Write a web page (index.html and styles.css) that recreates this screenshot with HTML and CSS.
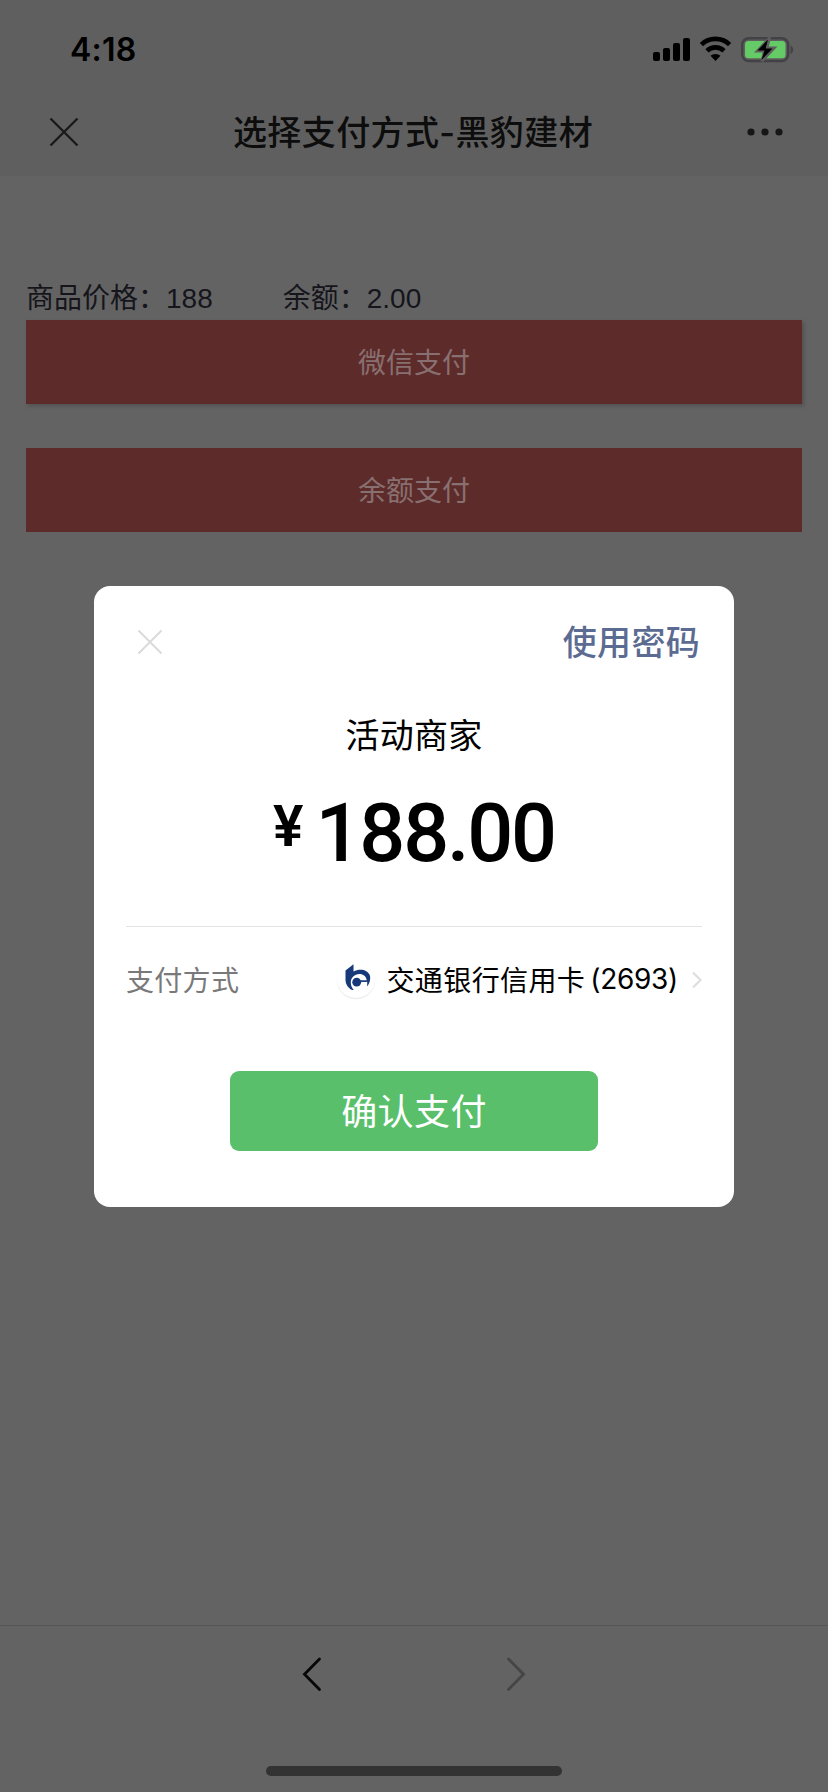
FILE: index.html
```html
<!DOCTYPE html>
<html lang="zh-CN">
<head>
<meta charset="utf-8">
<title>选择支付方式-黑豹建材</title>
<link rel="stylesheet" href="styles.css">
</head>
<body>
<div class="screen">
  <header class="header">
    <div class="status">
      <span class="time">4:18</span>
      <svg class="status-icons" width="144" height="28" viewBox="0 0 144 28">
        <rect x="1" y="16" width="7" height="9" rx="2"/>
        <rect x="11" y="12" width="7" height="13" rx="2"/>
        <rect x="21" y="7" width="7" height="18" rx="2"/>
        <rect x="31" y="2" width="7" height="23" rx="2"/>
        <path fill="none" stroke="#000" stroke-width="4.6" d="M49.4 8.6a20.3 20.3 0 0 1 28.2 0"/>
        <path fill="none" stroke="#000" stroke-width="4.6" d="M55 14.8a12.2 12.2 0 0 1 17 0"/>
        <path d="M58.5 19.8a7.5 7.5 0 0 1 10 0L63.500 25z"/>
        <rect x="90.200" y="2.200" width="46" height="22.800" rx="6.500" fill="none" stroke="#434145" stroke-width="2.400"/>
        <rect x="93" y="5" width="40.500" height="17.200" rx="3.500" fill="#65cb66"/>
        <path fill="#434145" d="M138.600 9.500c3.400 1.500 3.400 7 0 8.500z"/>
        <path stroke="#5f5f5f" stroke-width="3" d="M117.200 2.500L105.500 15h7l-2.500 10L122 12h-7z"/>
        <path d="M116 3.500L105.500 14.500h7l-3 9.500L120.500 12.500h-7z"/>
      </svg>
    </div>
    <div class="navbar">
      <svg class="nav-close" width="30" height="30" viewBox="0 0 30 30"><path d="M1.500 1.500l27 27M28.500 1.500l-27 27"/></svg>
      <h1 class="title">选择支付方式-黑豹建材</h1>
      <svg class="nav-more" width="36" height="8" viewBox="0 0 36 8"><circle cx="4" cy="4" r="3.600"/><circle cx="18" cy="4" r="3.600"/><circle cx="32" cy="4" r="3.600"/></svg>
    </div>
  </header>
  <main class="content">
    <div class="prices"><span class="price">商品价格：188</span><span class="balance">余额：2.00</span></div>
    <div class="pay-option raised">微信支付</div>
    <div class="pay-option">余额支付</div>
  </main>
  <footer class="toolbar">
    <div class="arrows">
      <svg width="20" height="36" viewBox="0 0 20 36"><path class="back" d="M17.500 2L2.500 17.200l15 15.200"/></svg>
      <svg width="20" height="36" viewBox="0 0 20 36"><path class="forward" d="M2.500 2l15 15.200-15 15.200"/></svg>
    </div>
    <div class="home-bar"></div>
  </footer>
</div>
<section class="dialog">
  <div class="dialog-head">
    <svg class="dialog-close" width="26" height="26" viewBox="0 0 26 26"><path d="M1.500 1.500l23 23M24.500 1.500l-23 23"/></svg>
    <span class="use-password">使用密码</span>
  </div>
  <div class="merchant">活动商家</div>
  <div class="amount"><span class="yen">¥</span><span class="sum">188.00</span></div>
  <div class="method">
    <span class="method-label">支付方式</span>
    <span class="bank-logo">
      <svg width="26" height="26" viewBox="0 0 26 26">
        <path fill="#17397a" d="M.5 6.500L8.500.200v7.300C11.500 5.800 15 5.300 18.500 6c4 1 6.700 4.200 6.700 7.600 0 3.700-1.100 6.600-3 8.800v-4.600h-6.700v-1.300h6.200c-.3-4-3.500-6.400-7.200-6.400-5 0-8.700 3.600-8.700 8.500 0 3.300 1.400 6 3.700 8.200C3.600 25.400.5 20.500.5 15.500z"/>
        <circle cx="11.700" cy="18.200" r="4.400" fill="#17397a"/>
        <path stroke="#17397a" stroke-width="1.300" d="M11.700 17.200h10"/>
      </svg>
    </span>
    <span class="bank">交通银行信用卡</span><span class="card-no">(2693)</span>
    <svg class="chevron" width="12" height="18" viewBox="0 0 12 18"><path d="M2 1.500L9.500 9 2 16.500"/></svg>
  </div>
  <div class="confirm">确认支付</div>
</section>
</body>
</html>
```
FILE: styles.css
```css
* { box-sizing: border-box; }

body {
  margin: 0;
  background: #636363;
  font-family: Inter, "Noto Sans CJK SC", sans-serif;
}

.screen {
  display: flex;
  flex-direction: column;
  height: 1792px;
}

.header {
  height: 176px;
  background: #5f5f5f;
}

.status {
  display: flex;
  justify-content: space-between;
  align-items: center;
  height: 88px;
  padding: 12px 33px 0 70px;
}

.time {
  font-size: 32px;
  font-weight: 600;
  line-height: 40px;
  letter-spacing: 0.2px;
}

.status-icons { margin-right: -1px; }

.navbar {
  display: flex;
  justify-content: space-between;
  align-items: center;
  height: 88px;
  padding: 0 45px 0 49px;
}

.nav-close {
  fill: none;
  stroke: #1a1a1a;
  stroke-width: 2.4;
}

.nav-more { fill: #161616; }

.title {
  margin: 0;
  padding-top: 2px;
  color: #0d0d0d;
  font-size: 34px;
  font-weight: 500;
  line-height: 48px;
  letter-spacing: 0.4px;
}

.content {
  flex: 1;
  padding: 100px 26px 0;
}

.prices {
  display: flex;
  gap: 70px;
  height: 44px;
  color: #15151b;
  font-family: "Liberation Sans", "Noto Sans CJK SC", sans-serif;
  font-size: 28px;
  line-height: 46px;
}

.pay-option {
  height: 84px;
  margin-bottom: 44px;
  background: #5e2b2b;
  color: #887070;
  font-size: 28px;
  line-height: 86px;
  text-align: center;
}

.raised { box-shadow: 2px 2px 4px rgba(0, 0, 0, 0.2); }

.toolbar {
  display: flex;
  flex-direction: column;
  justify-content: space-between;
  align-items: center;
  height: 167px;
  padding: 31px 0 16px;
  border-top: 1px solid #565656;
}

.arrows {
  display: flex;
  gap: 184px;
}

.arrows path {
  fill: none;
  stroke-width: 2.8;
  stroke-linecap: round;
}

.back { stroke: #070707; }
.forward { stroke: #454545; }

.home-bar {
  width: 296px;
  height: 10px;
  border-radius: 5px;
  background: #333;
}

.dialog {
  position: absolute;
  top: 586px;
  left: 94px;
  width: 640px;
  height: 621px;
  padding: 32px 32px 0;
  border-radius: 16px;
  background: #fff;
  color: #000;
}

.dialog-head {
  display: flex;
  justify-content: space-between;
  align-items: center;
  height: 48px;
  padding: 0 2px 0 11px;
}

.dialog-close {
  fill: none;
  stroke: #dadada;
  stroke-width: 2;
}

.use-password {
  padding-top: 2px;
  color: #5b6b92;
  font-size: 34px;
  font-weight: 500;
  line-height: 48px;
  letter-spacing: 0.3px;
}

.merchant {
  margin-top: 46px;
  font-size: 34px;
  line-height: 48px;
  text-align: center;
  letter-spacing: 0.3px;
}

.amount {
  display: flex;
  justify-content: center;
  gap: 12px;
  height: 167px;
  border-bottom: 1px solid #e3e3e3;
  font-family: Roboto, sans-serif;
}

.yen {
  padding-top: 37px;
  font-size: 57px;
  font-weight: 600;
  line-height: 60px;
}

.sum {
  padding-top: 28px;
  font-size: 81px;
  font-weight: 500;
  line-height: 92px;
  letter-spacing: -2.2px;
}

.method {
  display: flex;
  align-items: center;
  height: 104px;
  padding-bottom: 1px;
  font-size: 28px;
}

.method-label {
  flex: 1;
  color: #797979;
  letter-spacing: 0.3px;
}

.bank-logo {
  display: flex;
  justify-content: center;
  align-items: center;
  width: 38px;
  height: 38px;
  margin-right: 11px;
  border-radius: 50%;
  box-shadow: 0 1px 1px #e6e6e6;
}

.bank-logo svg { margin: -3px -3px 0 0; }

.bank { letter-spacing: 0.4px; }

.card-no {
  margin-left: 5px;
  letter-spacing: -0.3px;
}

.chevron {
  margin: 2px -1px 0 13px;
  fill: none;
  stroke: #dedede;
  stroke-width: 2.2;
}

.confirm {
  width: 368px;
  height: 80px;
  margin: 40px auto 0;
  border-radius: 9px;
  background: #59bf6b;
  color: #fff;
  font-size: 36px;
  line-height: 83px;
  text-align: center;
  letter-spacing: 0.4px;
}
```
